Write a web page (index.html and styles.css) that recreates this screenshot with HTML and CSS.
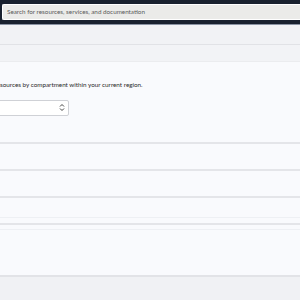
FILE: index.html
```html
<!DOCTYPE html>
<html lang="en">
  <head>
    <meta charset="UTF-8" />
    <meta name="viewport" content="width=device-width, initial-scale=1.0" />
    <title>Console</title>
    <link rel="stylesheet" href="styles.css">
  </head>
  <body>
    <header class="topbar">
      <div class="search">Search for resources, services, and documentation</div>
    </header>
    <div class="band"></div>
    <div class="band band--second"></div>
    <main class="content">
      <p class="intro">sources by compartment within your current region.</p>
      <div class="select">
        <svg class="chevrons" width="6" height="9" viewBox="0 0 6 9">
          <path d="M1 3.5 L3 1.5 L5 3.5 M1 5.5 L3 7.5 L5 5.5" fill="none" stroke="#444" stroke-width="1"/>
        </svg>
      </div>
      <div class="row row--first"></div>
      <div class="row"></div>
      <div class="row"></div>
      <div class="row row--split">
        <div class="row-mark"></div>
      </div>
      <div class="row row--tall">
        <div class="row-mark row-mark--top"></div>
      </div>
    </main>
    <footer class="bottom"></footer>
  </body>
</html>
```

FILE: styles.css
```css
* {
  box-sizing: border-box;
}
html,
body {
  margin: 0;
  height: 300px;
  overflow: hidden;
  font-family: Lato, "Liberation Sans", sans-serif;
  background: #f0f1f4;
}
.topbar {
  height: 25px;
  padding: 4px 0 0 2px;
  background: #19212f;
  border-bottom: 1px solid #8a93a3;
}
.search {
  height: 16px;
  padding: 0 0 0 4px;
  background: #ebebe9;
  border: 1px solid #ffffff;
  border-right: none;
  border-radius: 2px 0 0 2px;
  font-size: 6.3px;
  line-height: 14px;
  color: #5a5a5a;
  white-space: nowrap;
}
.band {
  height: 20px;
  background: #f1f2f5;
  border-bottom: 1px solid #e1e2e6;
}
.band--second {
  height: 17px;
  background: #f2f3f6;
  border-bottom: 1px solid #ebecef;
}
.content {
  background: #f9fafd;
  padding-top: 18px;
}
.intro {
  margin: 0;
  font-size: 6.3px;
  line-height: 10px;
  color: #2b2b2b;
  white-space: nowrap;
}
.select {
  position: relative;
  width: 71px;
  height: 16px;
  margin: 10px 0 0 -2px;
  background: #ffffff;
  border: 1px solid #cfd1d6;
  border-radius: 2px;
}
.chevrons {
  position: absolute;
  right: 3px;
  top: 2px;
}
.row {
  height: 27px;
  border-bottom: 2px solid #e4e5e9;
}
.row--first {
  height: 28px;
}
.row--split {
  padding-top: 19px;
}
.row-mark {
  border-top: 1px solid #eef0f4;
}
.row--tall {
  height: 52px;
  padding-top: 4px;
  border-bottom: 2px solid #e2e3e7;
}
.bottom {
  height: 23px;
  background: #f0f1f4;
}
```
